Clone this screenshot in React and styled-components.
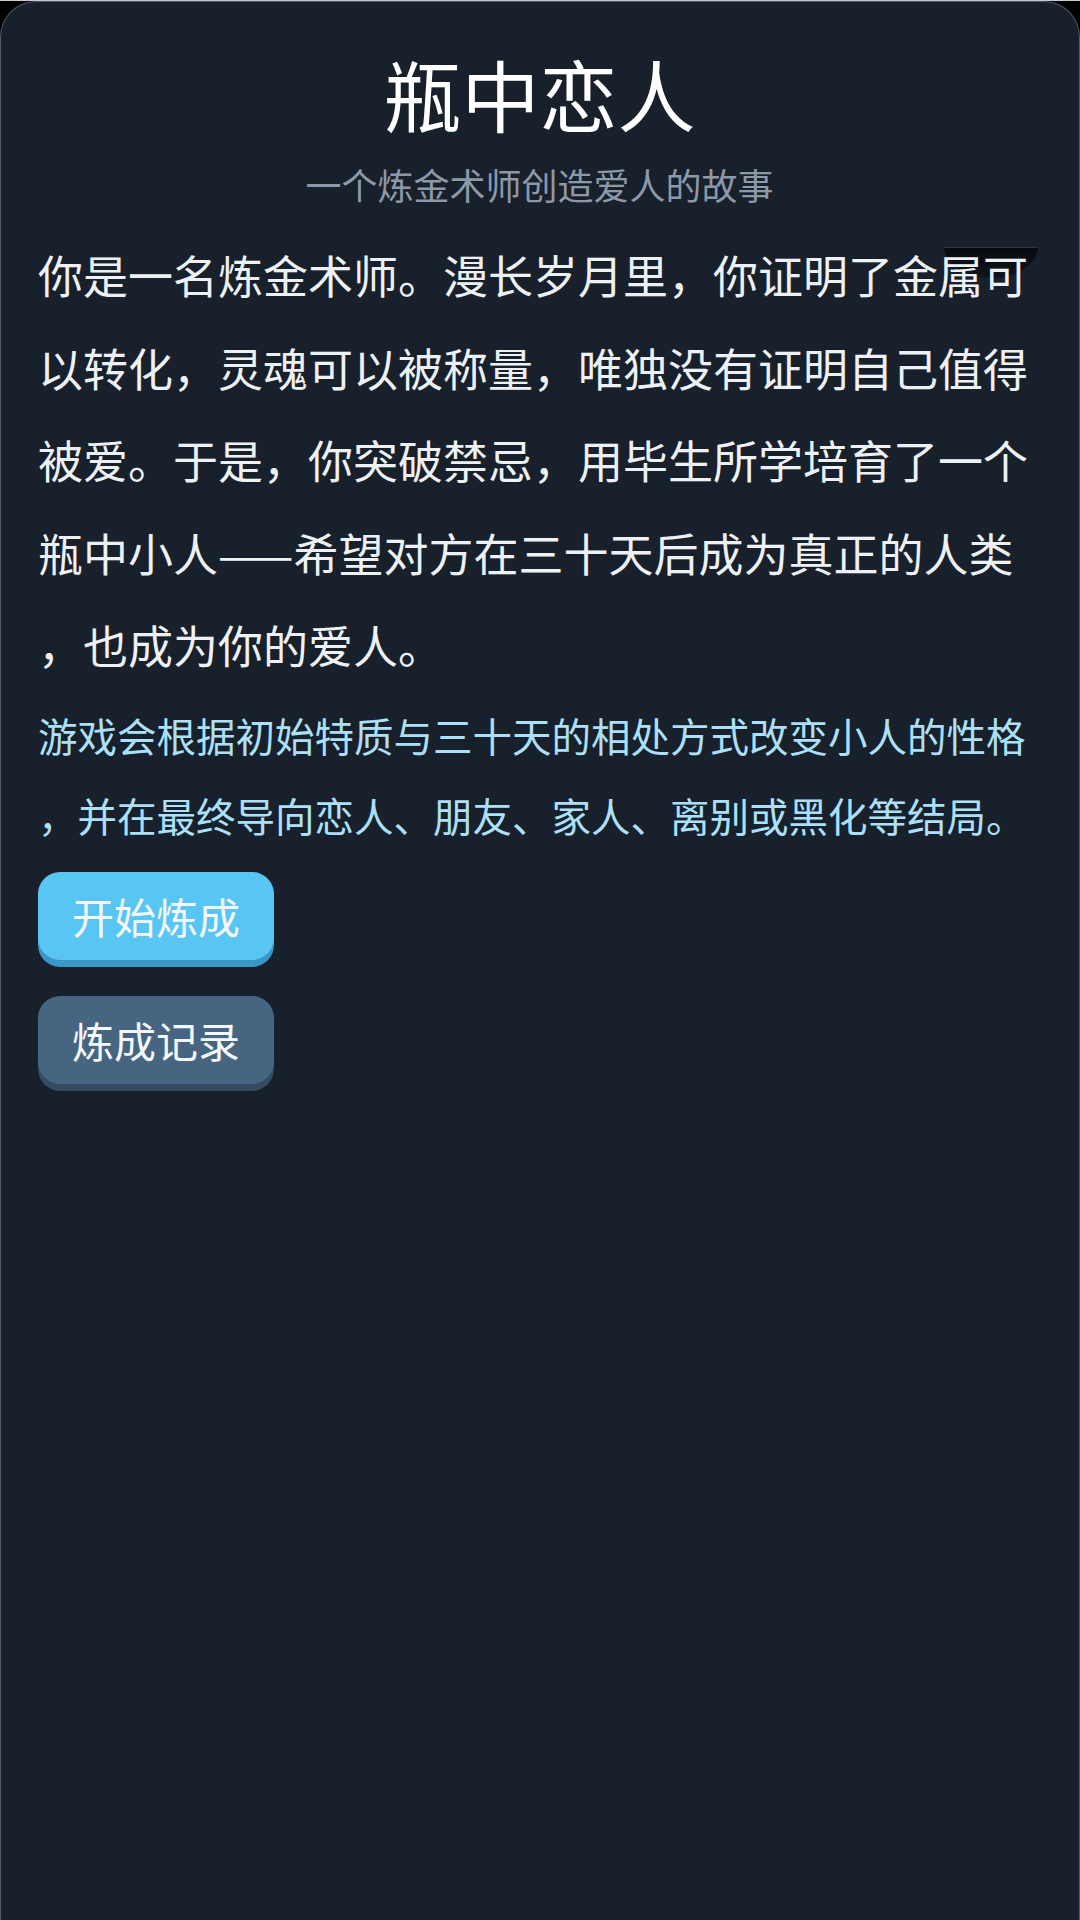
import React from 'react';
import styled, { createGlobalStyle } from 'styled-components';

const GlobalStyle = createGlobalStyle`
  html, body {
    margin: 0;
    padding: 0;
    background: #000;
  }
  body {
    font-family: "Noto Sans CJK SC", "Noto Sans", sans-serif;
  }
`;

const Page = styled.div`
  width: 1080px;
  min-height: 1920px;
  box-sizing: border-box;
  border-top: 1px solid #c6cacf;
  background: #000;
  display: flex;
  flex-direction: column;
`;

const Card = styled.main`
  position: relative;
  flex: 1;
  box-sizing: border-box;
  background: #18202b;
  border: 1px solid #4f5968;
  border-bottom: none;
  border-radius: 36px 36px 0 0;
  padding: 44px 38px 0 37px;
  display: flex;
  flex-direction: column;
`;

const Title = styled.h1`
  margin: 0;
  font-size: 78px;
  line-height: 94px;
  font-weight: 400;
  color: #ffffff;
  text-align: center;
`;

const Subtitle = styled.p`
  margin: 19px 0 0;
  font-size: 36px;
  line-height: 50px;
  color: #8d98a9;
  text-align: center;
`;

const Story = styled.p`
  position: relative;
  z-index: 1;
  margin: ${(p) => p.$top || 0}px 0 0;
  font-size: ${(p) => p.$size}px;
  line-height: ${(p) => p.$lh}px;
  color: ${(p) => p.$color};
  line-break: anywhere;
`;

const Notch = styled.div`
  position: absolute;
  top: 245px;
  left: 943px;
  width: 94px;
  height: 30px;
  background: linear-gradient(#080a0e, #0f141c);
  border-top: 1px solid #2c3442;
  border-radius: 0 0 50% 50% / 0 0 100% 100%;
`;

const Actions = styled.div`
  display: flex;
  flex-direction: column;
  align-items: flex-start;
  gap: 36px;
  margin-top: 17px;
`;

const Button = styled.button`
  height: 88px;
  padding: 0 34px;
  border: none;
  border-radius: 22px;
  font-family: inherit;
  font-size: 42px;
  color: #f4f8fb;
  background: ${(p) => p.$bg};
  box-shadow: 0 7px 0 ${(p) => p.$edge};
  display: flex;
  align-items: center;
  justify-content: center;
  cursor: pointer;
`;

export default function App() {
  return (
    <Page>
      <GlobalStyle />
      <Card>
        <Notch />
        <Title>瓶中恋人</Title>
        <Subtitle>一个炼金术师创造爱人的故事</Subtitle>
        <Story $top={20} $size={45} $lh={92.5} $color="#eef1f4">
          你是一名炼金术师。漫长岁月里，你证明了金属可以转化，灵魂可以被称量，唯独没有证明自己值得被爱。于是，你突破禁忌，用毕生所学培育了一个瓶中小人——希望对方在三十天后成为真正的人类，也成为你的爱人。
        </Story>
        <Story $top={3} $size={39.5} $lh={80} $color="#ace0f9">
          游戏会根据初始特质与三十天的相处方式改变小人的性格，并在最终导向恋人、朋友、家人、离别或黑化等结局。
        </Story>
        <Actions>
          <Button $bg="#59c5f3" $edge="#3b97c6">开始炼成</Button>
          <Button $bg="#466580" $edge="#344b61">炼成记录</Button>
        </Actions>
      </Card>
    </Page>
  );
}
